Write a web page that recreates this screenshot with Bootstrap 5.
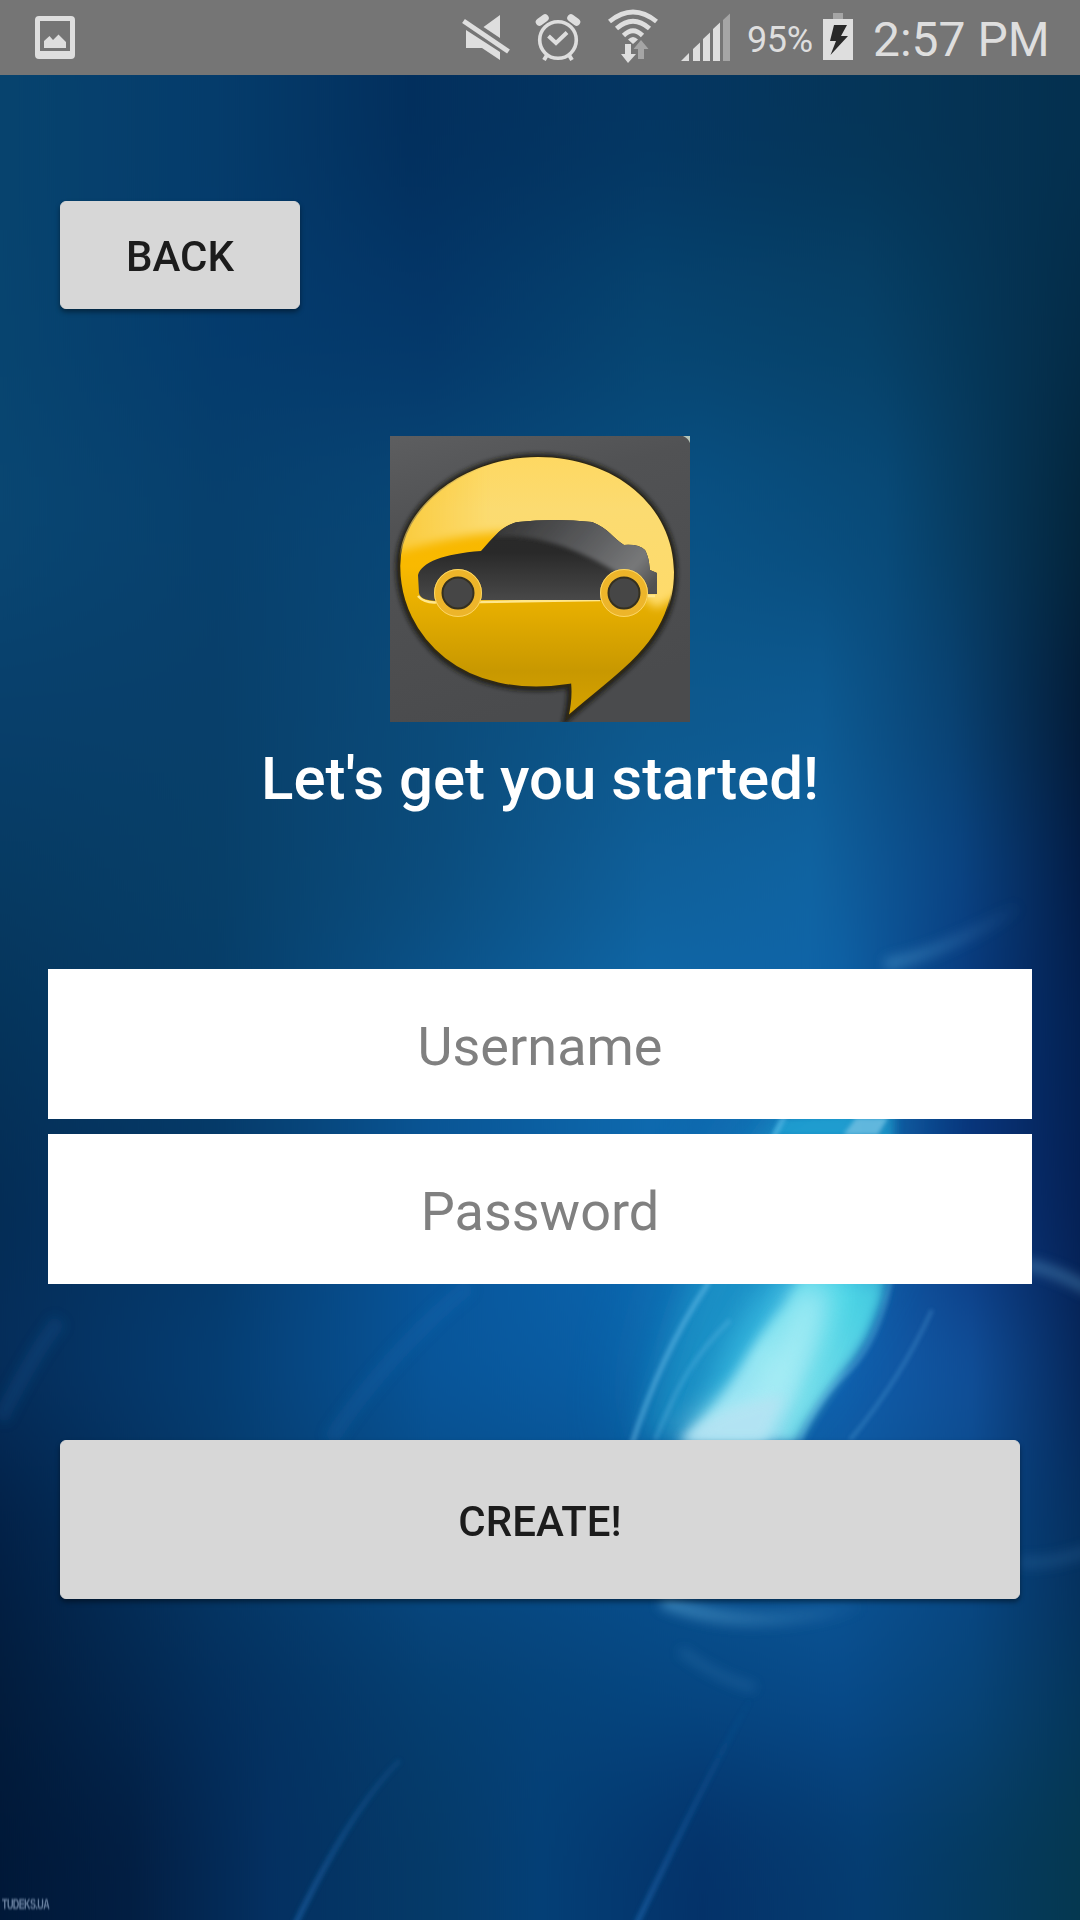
<!DOCTYPE html>
<html lang="en">
<head>
<meta charset="utf-8">
<meta name="viewport" content="width=device-width, initial-scale=1">
<title>Create account</title>
<link href="https://cdn.jsdelivr.net/npm/bootstrap@5.3.0/dist/css/bootstrap.min.css" rel="stylesheet">
<style>
body{font-family:Roboto,"Liberation Sans",sans-serif;background:#053a6b}
.phone{width:1080px;height:1920px}
.wallpaper{left:0;top:0;z-index:0}
.statusbar{height:75px;background:#757575;color:#dedede;z-index:1}
.statusbar svg{display:block;flex:none}
.battery-text{font-size:36px;line-height:75px;font-weight:400;width:67px;padding-top:5px;letter-spacing:-.4px}
.clock{font-size:48px;line-height:75px;font-weight:400;width:176px;margin-left:15px;padding-top:3px}
.screen{z-index:1;padding:126px 48px 0}
.btn-flat{--bs-btn-bg:#d7d7d7;--bs-btn-color:#1c1c1c;--bs-btn-border-color:#d7d7d7;--bs-btn-hover-bg:#cacaca;--bs-btn-border-radius:6px;--bs-btn-font-weight:500;--bs-btn-font-size:42px;--bs-btn-padding-y:0;--bs-btn-box-shadow:none;padding-top:3px;box-shadow:0 3px 5px rgba(0,0,0,.42)}
.btn-back{width:240px;height:108px;margin-left:12px}
.btn-create{height:159px;margin:156px 12px 0}
.app-logo{margin-top:127px}
.headline{font-size:60px;font-weight:500;line-height:70px;margin:22px 0 155px}
.field{height:150px;font-size:54px;padding:4px 12px 0;color:#444;background:#fff}
.field+.field{margin-top:15px}
.field::placeholder{color:#808080;opacity:1}
.watermark{left:2px;bottom:6px;font:700 15px/20px "Liberation Sans",sans-serif;color:#8fa6c4;opacity:.75;letter-spacing:-1px;filter:blur(.8px);z-index:1;transform:scaleX(.6);transform-origin:0 50%}
</style>
</head>
<body>
<div class="phone position-relative overflow-hidden d-flex flex-column">
<svg class="wallpaper position-absolute" width="1080" height="1920" viewBox="0 0 1080 1920" aria-hidden="true">
<defs>
<filter id="rows" filterUnits="userSpaceOnUse" x="-100" y="-200" width="1280" height="2320" color-interpolation-filters="sRGB"><feGaussianBlur stdDeviation="0 65"/></filter>
<filter id="b2" x="-50%" y="-50%" width="200%" height="200%"><feGaussianBlur stdDeviation="2"/></filter>
<filter id="b6" x="-50%" y="-50%" width="200%" height="200%"><feGaussianBlur stdDeviation="6"/></filter>
<filter id="b14" x="-50%" y="-50%" width="200%" height="200%"><feGaussianBlur stdDeviation="14"/></filter>
<filter id="b40" x="-60%" y="-60%" width="220%" height="220%"><feGaussianBlur stdDeviation="40"/></filter>
<linearGradient id="r1"><stop offset="0" stop-color="#07436e"/><stop offset=".2" stop-color="#053c6b"/><stop offset=".38" stop-color="#022f5d"/><stop offset=".6" stop-color="#043662"/><stop offset=".8" stop-color="#053558"/><stop offset="1" stop-color="#04304f"/></linearGradient>
<linearGradient id="r2"><stop offset="0" stop-color="#07446f"/><stop offset=".2" stop-color="#043b6d"/><stop offset=".4" stop-color="#043769"/><stop offset=".6" stop-color="#064470"/><stop offset=".8" stop-color="#064168"/><stop offset="1" stop-color="#042c48"/></linearGradient>
<linearGradient id="r3"><stop offset="0" stop-color="#094672"/><stop offset=".2" stop-color="#07406d"/><stop offset=".4" stop-color="#084777"/><stop offset=".65" stop-color="#095184"/><stop offset=".82" stop-color="#084a78"/><stop offset="1" stop-color="#04263d"/></linearGradient>
<linearGradient id="r4"><stop offset="0" stop-color="#083f6b"/><stop offset=".2" stop-color="#083f6a"/><stop offset=".4" stop-color="#0b4b7a"/><stop offset=".6" stop-color="#0d588c"/><stop offset=".76" stop-color="#0d5a92"/><stop offset=".88" stop-color="#094272"/><stop offset="1" stop-color="#031c38"/></linearGradient>
<linearGradient id="r5"><stop offset="0" stop-color="#063a62"/><stop offset=".2" stop-color="#073f68"/><stop offset=".4" stop-color="#0b4c7c"/><stop offset=".6" stop-color="#0f5f9a"/><stop offset=".75" stop-color="#1064a2"/><stop offset=".89" stop-color="#0a4484"/><stop offset="1" stop-color="#031d48"/></linearGradient>
<linearGradient id="r6"><stop offset="0" stop-color="#05335a"/><stop offset=".2" stop-color="#053c69"/><stop offset=".4" stop-color="#0a5590"/><stop offset=".6" stop-color="#0f6aac"/><stop offset=".78" stop-color="#0d62aa"/><stop offset=".9" stop-color="#07357a"/><stop offset="1" stop-color="#032152"/></linearGradient>
<linearGradient id="r7"><stop offset="0" stop-color="#042c55"/><stop offset=".2" stop-color="#053868"/><stop offset=".4" stop-color="#08559a"/><stop offset=".6" stop-color="#0c68b0"/><stop offset=".78" stop-color="#1261ac"/><stop offset=".9" stop-color="#0a357c"/><stop offset="1" stop-color="#052055"/></linearGradient>
<linearGradient id="r8"><stop offset="0" stop-color="#052e5c"/><stop offset=".2" stop-color="#053e74"/><stop offset=".4" stop-color="#08569b"/><stop offset=".6" stop-color="#0a60a8"/><stop offset=".78" stop-color="#1060b0"/><stop offset=".9" stop-color="#11509a"/><stop offset="1" stop-color="#06285c"/></linearGradient>
<linearGradient id="r9"><stop offset="0" stop-color="#022046"/><stop offset=".2" stop-color="#053866"/><stop offset=".4" stop-color="#074a84"/><stop offset=".6" stop-color="#08508f"/><stop offset=".76" stop-color="#0d5898"/><stop offset=".9" stop-color="#084785"/><stop offset="1" stop-color="#053060"/></linearGradient>
<linearGradient id="r10"><stop offset="0" stop-color="#021c3c"/><stop offset=".2" stop-color="#032e5c"/><stop offset=".4" stop-color="#053e70"/><stop offset=".6" stop-color="#054680"/><stop offset=".78" stop-color="#074a8a"/><stop offset=".9" stop-color="#074478"/><stop offset="1" stop-color="#05365c"/></linearGradient>
<linearGradient id="r11"><stop offset="0" stop-color="#001838"/><stop offset=".12" stop-color="#021e42"/><stop offset=".25" stop-color="#043061"/><stop offset=".4" stop-color="#053a68"/><stop offset=".5" stop-color="#043f76"/><stop offset=".65" stop-color="#043269"/><stop offset=".8" stop-color="#053c70"/><stop offset="1" stop-color="#053850"/></linearGradient>
<linearGradient id="beam" x1="0" y1="1" x2=".7" y2="0"><stop offset="0" stop-color="#9bd9f2"/><stop offset=".35" stop-color="#a2eff6"/><stop offset=".65" stop-color="#54daea"/><stop offset="1" stop-color="#219fce"/></linearGradient>
<linearGradient id="wisp" gradientUnits="userSpaceOnUse" x1="885" y1="965" x2="1025" y2="900"><stop offset="0" stop-color="#7bc9f4" stop-opacity=".3"/><stop offset="1" stop-color="#7bc9f4" stop-opacity="0"/></linearGradient>
<linearGradient id="wisp2" gradientUnits="userSpaceOnUse" x1="662" y1="0" x2="870" y2="0"><stop offset="0" stop-color="#7bc9f4" stop-opacity=".4"/><stop offset="1" stop-color="#7bc9f4" stop-opacity="0"/></linearGradient>
<linearGradient id="ray" gradientUnits="userSpaceOnUse" x1="0" y1="1690" x2="0" y2="1920"><stop offset="0" stop-color="#287bc9" stop-opacity="0"/><stop offset="1" stop-color="#287bc9" stop-opacity=".4"/></linearGradient>
</defs>
<g filter="url(#rows)">
<rect x="0" y="-200" width="1080" height="430" fill="url(#r1)"/><rect y="230" width="1080" height="190" fill="url(#r2)"/><rect y="420" width="1080" height="200" fill="url(#r3)"/><rect y="620" width="1080" height="180" fill="url(#r4)"/><rect y="800" width="1080" height="160" fill="url(#r5)"/><rect y="960" width="1080" height="170" fill="url(#r6)"/><rect y="1130" width="1080" height="160" fill="url(#r7)"/><rect y="1290" width="1080" height="160" fill="url(#r8)"/><rect y="1450" width="1080" height="170" fill="url(#r9)"/><rect y="1620" width="1080" height="150" fill="url(#r10)"/><rect y="1770" width="1080" height="350" fill="url(#r11)"/>
</g>
<ellipse cx="770" cy="1250" rx="75" ry="230" transform="rotate(26 770 1250)" fill="#1b9fd0" opacity=".45" filter="url(#b40)"/>
<path d="M640 1440C665 1370 700 1200 790 1110L870 1105L850 1285L760 1440Z" fill="#20a4d0" opacity=".5" filter="url(#b14)"/>
<path d="M700 1420C720 1350 750 1290 800 1260L870 1270L770 1442Z" fill="#3cc3e6" opacity=".7" filter="url(#b14)"/>
<path d="M680 1442C730 1400 745 1345 785 1305C815 1250 860 1180 885 1110L893 1110C893 1240 895 1275 868 1335C848 1370 820 1395 795 1442Z" fill="url(#beam)" opacity=".85" filter="url(#b6)"/>
<path d="M830 1288Q825 1340 800 1385L780 1442L800 1438Q822 1395 855 1352L885 1290Z" fill="#4fdde6" opacity=".4" filter="url(#b6)"/>
<path d="M675 1442Q700 1405 755 1390Q780 1350 795 1290L830 1283Q825 1340 792 1385L760 1442Z" fill="#b4f1f7" opacity=".7" filter="url(#b14)"/>
<path d="M680 1442Q715 1405 785 1395L765 1442Z" fill="#b5e3f3" opacity=".85" filter="url(#b6)"/>
<path d="M780 1120L888 1116L875 1134L772 1134Z" fill="#22a7d7" opacity=".6" filter="url(#b2)"/>
<path d="M843 1135L856 1118L888 1118L878 1135Z" fill="#72c0e2" opacity=".8" filter="url(#b2)"/>
<g fill="none" stroke="#7bc9f4" filter="url(#b2)">
<path d="M630 1450Q660 1355 707 1285Q740 1200 785 1115" stroke-width="5" opacity=".45"/>
<path d="M655 1440C680 1380 695 1355 730 1320" stroke-width="4" opacity=".28"/>
<path d="M850 1440Q900 1380 932 1310" stroke-width="3" opacity=".3"/>
<path d="M893 1270Q880 1340 850 1370Q820 1395 800 1440" stroke-width="3" opacity=".3"/>
</g>
<g fill="none" filter="url(#b6)">
<path d="M1025 1264Q1055 1270 1090 1290" stroke="#7bc9f4" stroke-width="11" opacity=".32"/>
<path d="M885 965Q950 950 1020 906" stroke="url(#wisp)" stroke-width="12"/>
<path d="M662 1600Q745 1635 860 1605" stroke="url(#wisp2)" stroke-width="15"/>
<path d="M680 1650Q720 1680 755 1688" stroke="#7bc9f4" stroke-width="9" opacity=".14"/>
<path d="M1020 1562Q1050 1565 1090 1550" stroke="#7bc9f4" stroke-width="12" opacity=".12"/>
<path d="M60 1320Q35 1350 0 1420M470 1285Q390 1350 330 1440" stroke="#287bc9" stroke-width="16" opacity=".16"/>
</g>
<path d="M750 1700Q700 1790 636 1925M400 1760Q350 1810 295 1925" fill="none" stroke="url(#ray)" stroke-width="6" filter="url(#b2)"/>
</svg>

<header class="statusbar position-relative d-flex align-items-center">
<svg width="747" height="75" viewBox="0 0 747 75" fill="#dedede" aria-hidden="true">
<path fill-rule="evenodd" d="M39 16H71Q75 16 75 20V55Q75 59 71 59H39Q35 59 35 55V20Q35 16 39 16ZM40 21V51H70V21Z"/>
<path d="M44 48V41L49.500 36L53 40L58.500 34.500L66 42V48Z"/>
<path d="M500 15V38L483.500 27Z M466 30L500 52V60L482 48H466Z"/><path d="M463.500 21L508.500 51.500" stroke="#dedede" stroke-width="5"/>
<g fill="none" stroke="#dedede"><circle cx="558" cy="40" r="18.300" stroke-width="3.600"/><path d="M548.500 36L556 43L567 32.500" stroke-width="4"/><path d="M547 55L544 60M569 55L572 60" stroke-width="4"/><path d="M539.500 22L545 18M576.500 22L571 18" stroke-width="7.500" stroke-linecap="round"/></g>
<g fill="none" stroke="#dedede" stroke-width="4.700"><path d="M609.500 21.500Q633 2.500 656.500 21.500M616.500 28.500Q633 14 649.500 28.500M623.500 35.500Q633 26 642.500 35.500"/></g>
<path d="M628 39.500Q633 34.500 638 39.500L633 44Z"/>
<path d="M625 44H631V54H636L628 63L621 54H625Z"/><path d="M638 59V49H633.500L641 40L648.500 49H644V59Z" fill="#a5a5a5"/>
<path d="M681 61L689 53V61ZM693 49L700 42.500V61H693ZM703 39L710 32.500V61H703ZM713 29L720 22.500V61H713Z"/><path d="M723 20L730 13.500V61H723Z" fill="#a5a5a5"/>
</svg>
<span class="battery-text text-nowrap">95%</span>
<svg width="44" height="75" viewBox="814 0 44 75" aria-hidden="true"><path d="M833 13H843V19H833Z" fill="#a5a5a5"/><path d="M823 19H853V60H823Z" fill="#dedede"/><path d="M834 25H847L841 36H848L830.500 55L836 41H830Z" fill="#292929"/></svg>
<span class="clock text-nowrap">2:57 PM</span>
</header>

<main class="screen position-relative d-flex flex-column">
<button type="button" class="btn btn-flat btn-back">BACK</button>
<svg class="app-logo align-self-center flex-shrink-0" width="300" height="286" viewBox="0 0 300 286" role="img" aria-label="Car in a speech bubble">
<defs>
<linearGradient id="lg" x1="0" y1="0" x2=".3" y2="1"><stop offset="0" stop-color="#5d5e60"/><stop offset=".3" stop-color="#515254"/><stop offset="1" stop-color="#4a4b4d"/></linearGradient>
<linearGradient id="yl" x1="0" y1="0" x2="0" y2="1"><stop offset="0" stop-color="#f6b800"/><stop offset=".42" stop-color="#f9b900"/><stop offset=".6" stop-color="#e3ac00"/><stop offset=".82" stop-color="#c89800"/><stop offset="1" stop-color="#d7a300"/></linearGradient>
<linearGradient id="gloss" x1="0" y1="0" x2="0" y2="1"><stop offset="0" stop-color="#ffd75c"/><stop offset=".4" stop-color="#fbdb71"/><stop offset="1" stop-color="#ffdb69"/></linearGradient>
<linearGradient id="fade"><stop offset="0" stop-color="#fff" stop-opacity=".4"/><stop offset=".35" stop-color="#fff"/></linearGradient>
<linearGradient id="body" x1="0" y1="0" x2="0" y2="1"><stop offset="0" stop-color="#2a2a29"/><stop offset=".4" stop-color="#292929"/><stop offset="1" stop-color="#494949"/></linearGradient>
<linearGradient id="glass" x1="0" y1="0" x2="1" y2=".4"><stop offset="0" stop-color="#303030"/><stop offset=".55" stop-color="#5b5c5e"/><stop offset=".85" stop-color="#777879"/><stop offset="1" stop-color="#515151"/></linearGradient>
<mask id="gm"><path d="M-20 -20H320V142L266 172Q180 100 115 96Q60 98 -20 125Z" fill="url(#fade)" filter="url(#b4)"/></mask>
<filter id="b4" x="-20%" y="-20%" width="140%" height="140%"><feGaussianBlur stdDeviation="5"/></filter>
<clipPath id="bub"><path id="bubble" d="M148 21C224 21 284 70 284 136C284 207 225 239 177 282C180 269 181 261 180 249C73 266 9 202 9 130C9 70 75 21 148 21Z"/></clipPath>
<clipPath id="carclip"><path id="car" d="M28 139C32 126 53 118 91 115C103 102 112 89 128 86Q164 82 202 86C218 92 224 103 234 109Q249 108 255 114C259 122 259 126 260 134L267 137V158H252L210 164H91L50 165C38 165 30 163 29 157Z"/></clipPath>
</defs>
<path d="M0 0H300V286H0Z" fill="url(#lg)"/>
<use href="#bubble" fill="none" stroke="#171411" stroke-width="7" opacity=".75" filter="url(#b2)"/>
<use href="#bubble" fill="url(#yl)" stroke="#2e2817" stroke-width="2.500"/>
<g clip-path="url(#bub)"><rect width="300" height="185" fill="url(#gloss)" mask="url(#gm)"/><path d="M28 160Q35 168 50 166H91L210 164M250 160H265" fill="none" stroke="#ffe78c" stroke-width="2.500"/></g>
<use href="#car" fill="url(#body)"/>
<g clip-path="url(#carclip)"><path d="M105 101C145 96 190 114 226 136L245 160H300V70H120Z" fill="url(#glass)" filter="url(#b2)"/></g>
<g fill="#464646" stroke="#edb52a" stroke-width="8"><circle cx="68" cy="157" r="20"/><circle cx="234" cy="157" r="20"/></g>
<g fill="none" stroke="#ffdf72" stroke-width="1" opacity=".8"><circle cx="68" cy="157" r="23.500"/><circle cx="234" cy="157" r="23.500"/></g>
<g fill="none" stroke="#35301f" stroke-width="2"><circle cx="68" cy="157" r="15.500"/><circle cx="234" cy="157" r="15.500"/></g>
<path d="M293 0H300V7Q298 2 293 0Z" fill="#b5c4b9"/>
</svg>
<h1 class="headline text-white text-center">Let's get you started!</h1>
<form class="d-flex flex-column" onsubmit="return false">
<input type="text" class="field form-control border-0 rounded-0 text-center" placeholder="Username" aria-label="Username">
<input type="password" class="field form-control border-0 rounded-0 text-center" placeholder="Password" aria-label="Password">
<button type="submit" class="btn btn-flat btn-create">CREATE!</button>
</form>
</main>
<span class="watermark position-absolute">TUDEKS.UA</span>
</div>
<script src="https://cdn.jsdelivr.net/npm/bootstrap@5.3.0/dist/js/bootstrap.bundle.min.js"></script>
</body>
</html>
